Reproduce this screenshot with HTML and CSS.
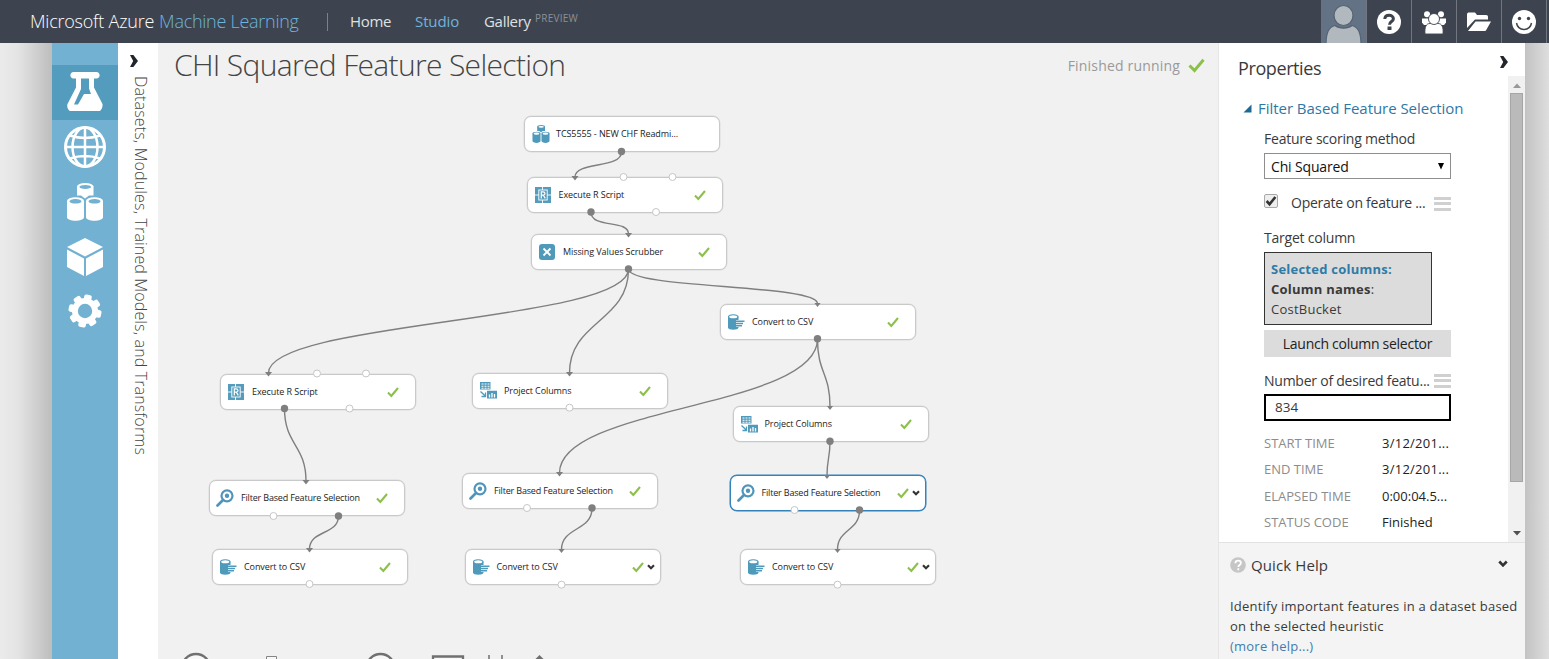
FILE: index.html
```html
<!DOCTYPE html>
<html lang="en">
<head>
<meta charset="utf-8">
<title>Microsoft Azure Machine Learning</title>
<link rel="stylesheet" href="styles.css">
</head>
<body>
<svg class="defs" aria-hidden="true">
  <symbol id="check" viewBox="0 0 12 12"><path d="M1 6.6 4.3 10 11 2" fill="none" stroke="#8cc04b" stroke-width="2.1"/></symbol>
  <symbol id="chev-r" viewBox="0 0 8 12"><path d="M0 0h3.4L8 6l-4.600 6H0l3.200-6z" fill="#22252b"/></symbol>
  <symbol id="chev-d" viewBox="0 0 8 6"><path d="M1 1.200 4 4.300 7 1.200" fill="none" stroke="#333" stroke-width="2.100"/></symbol>
  <symbol id="cylinders" viewBox="0 0 36 38">
    <path d="M10 3.500v9h4l4 3 4-3h4.500v-9z"/><ellipse cx="18.250" cy="3.500" rx="8.250" ry="3.500"/>
    <path d="M0 18v16c0 5 17 5 17 0V18zM19 18v16c0 5 17 5 17 0V18z"/>
    <ellipse cx="8.500" cy="18" rx="8.500" ry="3.800"/><ellipse cx="27.500" cy="18" rx="8.500" ry="3.800"/>
    <g class="hole"><ellipse cx="18.250" cy="3.900" rx="5.800" ry="2"/><ellipse cx="8.500" cy="18.300" rx="6" ry="2.300"/><ellipse cx="27.500" cy="18.300" rx="6" ry="2.300"/></g>
  </symbol>
  <symbol id="rscript" viewBox="0 0 16 16">
    <rect width="16" height="16" fill="#559cbc"/>
    <path d="M0 8h4M12 8h4M7.500 0v3M7.500 13v3" stroke="#fff" stroke-width=".9"/>
    <rect x="3.800" y="3" width="8.400" height="10" fill="#559cbc" stroke="#fff" stroke-width=".9"/>
    <path d="M6.300 11.400V4.900h1.700c2.600 0 2.600 3.300 0 3.300H6.300M8.300 8.200l2 3.200" fill="none" stroke="#fff" stroke-width="1.200"/>
  </symbol>
  <symbol id="scrub" viewBox="0 0 16 16"><rect width="16" height="16" rx="3" fill="#4f9abb"/><path d="M4.500 4.500l7 7M11.500 4.500l-7 7" stroke="#fff" stroke-width="1.800"/></symbol>
  <symbol id="csv" viewBox="0 0 17 16">
    <path d="M0 2.500v11c0 3 10.500 3 10.500 0v-11z" fill="#4f9abb"/><ellipse cx="5.250" cy="2.700" rx="5.250" ry="2.500" fill="#4f9abb"/><ellipse cx="5.250" cy="2.800" rx="4" ry="1.500" fill="#fff"/>
    <path d="M8 6H17v7H8z" fill="#fff"/><path d="M8 7.200H16.500M8 9.500h7M8 11.800H14" stroke="#4f9abb" stroke-width="1.400"/>
  </symbol>
  <symbol id="project" viewBox="0 0 17 17">
    <path d="M0 0h10.500v7.500H0zM7 8.800h10v7.700H7z" fill="#4f9abb"/>
    <path d="M1.500 2h8M1.500 4.200h8M1.500 6.300h8" stroke="#fff" stroke-width="1.100" stroke-dasharray="2 1"/>
    <path d="M9.500 15.500v-3M12 15.500v-4.500M14.500 15.500v-3.500" stroke="#fff" stroke-width="1.300"/>
    <path d="M.5 9.500 5 13.800M5.500 10.500v4H1.500" fill="none" stroke="#4f9abb" stroke-width="1.300"/>
  </symbol>
  <symbol id="filter" viewBox="0 0 18 18"><circle cx="11" cy="6.800" r="5.500" fill="none" stroke="#4f94bb" stroke-width="2.200"/><circle cx="11" cy="6.800" r="2.200" fill="#4f94bb"/><path d="M7 11 1.500 16.500" stroke="#4f94bb" stroke-width="2.700" stroke-linecap="round"/></symbol>
</svg>

<header class="topbar">
  <div class="brand"><span class="brand-ms">Microsoft Azure</span><span class="brand-ml">Machine Learning</span></div>
  <nav class="nav">
    <a class="nav-home">Home</a><a class="nav-studio">Studio</a><a class="nav-gallery">Gallery</a><span class="preview">PREVIEW</span>
  </nav>
  <div class="tools">
    <div class="tool avatar"><svg width="45" height="43" viewBox="0 0 45 43"><g fill="#b1b9bf" stroke="#566372" stroke-width="1.200"><path d="M5 44c0-10 2-17 9-18.500 4 3.500 13 3.500 17 0 7 1.500 9 8.500 9 18.500z"/><ellipse cx="22.500" cy="15.500" rx="9.500" ry="10"/></g></svg></div>
    <div class="tool"><svg width="24" height="24" viewBox="0 0 24 24"><circle cx="12" cy="12" r="12" fill="#fff"/><path d="M7.800 9c.2-5 8.600-4.700 8.600-.3 0 3-3.900 2.700-3.900 6" fill="none" stroke="#3e444f" stroke-width="3"/><path d="M10.500 16.500h4v3.500h-4z" fill="#3e444f"/></svg></div>
    <div class="tool"><svg width="24" height="24" viewBox="0 0 24 24" fill="#fff"><circle cx="5" cy="4.300" r="3"/><circle cx="19" cy="4.300" r="3"/><path d="M0 8.500h24v4L22 15H2l-2-2.500z"/><g stroke="#3e444f" stroke-width=".9"><path d="M3 24c-.5-7 1-10.500 5-10.500h8c4 0 5.500 3.500 5 10.500z"/><circle cx="12" cy="9" r="5.500"/></g></svg></div>
    <div class="tool"><svg width="24" height="20" viewBox="0 0 24 20" fill="#fff"><path d="M0 16V2.500C0 1 1 .5 2 .5h6l2 2.500h9c1.500 0 2 .7 2 2v2.500H8z"/><path d="M1 19 8.500 9.500H24l-4.500 8c-.5 1-1 1.500-2.500 1.500z"/></svg></div>
    <div class="tool tool-last"><svg width="24" height="24" viewBox="0 0 24 24"><circle cx="12" cy="12" r="12" fill="#fff"/><g fill="#3e444f"><circle cx="7.500" cy="8.500" r="1.700"/><circle cx="16.500" cy="8.500" r="1.700"/></g><path d="M4.500 13c1.500 8.500 13.500 8.500 15 0" fill="none" stroke="#3e444f" stroke-width="1.500"/></svg></div>
  </div>
</header>

<main class="stage">
  <div class="shade-left"></div>
  <aside class="rail">
    <div class="rail-item rail-active"><svg width="36" height="40" viewBox="0 0 36 40" fill="#fff"><path d="M6 0h24c3.500 1 3.500 5.500 0 6.500H27v9l8.500 16.500c.5 3-1.500 7-3 7h-29c-2 0-4-4-3-7L9 15.500v-9H6c-3.500-1-3.500-5.500 0-6.500z"/><path d="M14 6.500h8v10L24 22h-7l-6 10.500H7L14 17z" fill="#539cbd"/></svg></div>
    <div class="rail-item"><svg width="42" height="42" viewBox="0 0 42 42" fill="none" stroke="#fff" stroke-width="2.500"><circle cx="21" cy="21" r="19.500" stroke-width="3"/><ellipse cx="21" cy="21" rx="12.500" ry="19.500"/><path d="M21 1v40M1.500 21h39M6 9.500q15 5 30 0M6 32.500q15-5 30 0"/></svg></div>
    <div class="rail-item"><svg class="cyl-white" width="36" height="38"><use href="#cylinders"/></svg></div>
    <div class="rail-item"><svg width="36" height="38" viewBox="0 0 36 38" fill="#fff"><path d="M18 0 36 9 18 18.500 0 9zM0 11.500 17 20.500V38L0 29zM36 11.500 19 20.500V38l17-9z"/></svg></div>
    <div class="rail-item"><svg width="34" height="34" viewBox="-17 -17 34 34"><g fill="#fff" transform="rotate(12)"><g id="tooth"><rect x="-3.800" y="-16.500" width="7.600" height="33" rx="2"/><rect x="-16.500" y="-3.800" width="33" height="7.600" rx="2"/></g><use href="#tooth" transform="rotate(45)"/><circle r="13"/></g><circle r="7.200" fill="#72b1d1"/></svg></div>
  </aside>
  <aside class="palette">
    <svg class="palette-chev" width="8" height="12"><use href="#chev-r"/></svg>
    <div class="palette-label">Datasets, Modules, Trained Models, and Transforms</div>
  </aside>

  <section class="canvas">
    <div class="canvas-head">
      <h1>CHI Squared Feature Selection</h1>
      <div class="status"><span>Finished running</span><svg width="17" height="15" viewBox="0 0 17 15"><path d="M1.500 7.500 6.500 12.500 15.500 1.800" fill="none" stroke="#8cc04b" stroke-width="3"/></svg></div>
    </div>

    <div class="node n-data"><svg class="cyl-blue" width="18" height="18"><use href="#cylinders"/></svg><span>TCS5555 - NEW CHF Readmi...</span></div>
    <div class="node n-r1"><svg width="16" height="16"><use href="#rscript"/></svg><span>Execute R Script</span><svg class="ok"><use href="#check"/></svg></div>
    <div class="node n-scrub"><svg width="16" height="16"><use href="#scrub"/></svg><span>Missing Values Scrubber</span><svg class="ok"><use href="#check"/></svg></div>
    <div class="node n-csv0"><svg width="17" height="16"><use href="#csv"/></svg><span>Convert to CSV</span><svg class="ok"><use href="#check"/></svg></div>
    <div class="node n-r2"><svg width="16" height="16"><use href="#rscript"/></svg><span>Execute R Script</span><svg class="ok"><use href="#check"/></svg></div>
    <div class="node n-pc1"><svg width="17" height="17"><use href="#project"/></svg><span>Project Columns</span><svg class="ok"><use href="#check"/></svg></div>
    <div class="node n-pc2"><svg width="17" height="17"><use href="#project"/></svg><span>Project Columns</span><svg class="ok"><use href="#check"/></svg></div>
    <div class="node long n-f1"><svg width="18" height="18"><use href="#filter"/></svg><span>Filter Based Feature Selection</span><svg class="ok"><use href="#check"/></svg></div>
    <div class="node long n-f2"><svg width="18" height="18"><use href="#filter"/></svg><span>Filter Based Feature Selection</span><svg class="ok"><use href="#check"/></svg></div>
    <div class="node long n-f3 selected"><svg width="18" height="18"><use href="#filter"/></svg><span>Filter Based Feature Selection</span><svg class="ok"><use href="#check"/></svg><svg class="more"><use href="#chev-d"/></svg></div>
    <div class="node n-c1"><svg width="17" height="16"><use href="#csv"/></svg><span>Convert to CSV</span><svg class="ok"><use href="#check"/></svg></div>
    <div class="node n-c2"><svg width="17" height="16"><use href="#csv"/></svg><span>Convert to CSV</span><svg class="ok"><use href="#check"/></svg><svg class="more"><use href="#chev-d"/></svg></div>
    <div class="node n-c3"><svg width="17" height="16"><use href="#csv"/></svg><span>Convert to CSV</span><svg class="ok"><use href="#check"/></svg><svg class="more"><use href="#chev-d"/></svg></div>

    <svg class="edges" width="1060" height="616" viewBox="158 43 1060 616">
      <defs>
        <marker id="arrow" viewBox="0 0 8 5" refX="4" refY="1" markerWidth="8" markerHeight="5" markerUnits="userSpaceOnUse"><path d="M.5 0h7L4 4.500z" fill="#7f7f7f"/></marker>
      </defs>
      <g fill="none" stroke="#7f7f7f" stroke-width="1.400">
        <path marker-end="url(#arrow)" d="M621.500 152C621.500 169 575 161 575 177"/>
        <path marker-end="url(#arrow)" d="M591 212C591 229 628.500 219 628.500 234"/>
        <path marker-end="url(#arrow)" d="M628.500 269C628.500 322 268.500 321 268.500 373"/>
        <path marker-end="url(#arrow)" d="M628.500 269C628.500 322 569.500 321 569.500 373"/>
        <path marker-end="url(#arrow)" d="M628.500 269C628.500 289 817.500 284 817.500 303.500"/>
        <path marker-end="url(#arrow)" d="M817.500 339C817.500 408 559.500 406 559.500 473"/>
        <path marker-end="url(#arrow)" d="M817.500 339C817.500 373 830 373 830 406.500"/>
        <path marker-end="url(#arrow)" d="M284.500 408.500C284.500 445 306 445 306 481"/>
        <path marker-end="url(#arrow)" d="M830 441.500C830 458 827 459 827 475.500"/>
        <path marker-end="url(#arrow)" d="M338.500 516C338.500 535 309.500 530 309.500 549"/>
        <path marker-end="url(#arrow)" d="M592 508.500C592 531 561.500 527 561.500 549.500"/>
        <path marker-end="url(#arrow)" d="M859.500 510.500C859.500 531 837.500 529 837.500 549.500"/>
      </g>
      <g fill="#7f7f7f">
        <circle cx="621.500" cy="151.500" r="3.700"/><circle cx="591" cy="212" r="3.700"/><circle cx="628.500" cy="269" r="3.700"/><circle cx="817.500" cy="338.700" r="3.700"/><circle cx="284.500" cy="408.500" r="3.700"/><circle cx="830" cy="441.200" r="3.700"/><circle cx="338.500" cy="516" r="3.700"/><circle cx="592" cy="508" r="3.700"/><circle cx="859.500" cy="510" r="3.700"/>
      </g>
      <g fill="#fff" stroke="#c6c6c6">
        <circle cx="623.500" cy="177" r="3.500"/><circle cx="672.500" cy="177" r="3.500"/><circle cx="656" cy="212" r="3.500"/><circle cx="317" cy="373.500" r="3.500"/><circle cx="366" cy="373.500" r="3.500"/><circle cx="349.500" cy="408.500" r="3.500"/><circle cx="569.500" cy="407.700" r="3.500"/><circle cx="273.500" cy="516" r="3.500"/><circle cx="527" cy="508" r="3.500"/><circle cx="794.500" cy="510" r="3.500"/><circle cx="309.500" cy="584" r="3.500"/><circle cx="561.500" cy="584.700" r="3.500"/><circle cx="837.500" cy="584.700" r="3.500"/>
      </g>
      <g fill="#f7f7f7" stroke="#707070" stroke-width="2.300">
        <circle cx="196" cy="668" r="14"/><circle cx="380.500" cy="668" r="14"/><path d="M433 662v-5.500h30v5.500"/><path d="M489 655v5M502 655v5" stroke-width="1.500"/>
        <path d="M266.500 660v-3.500h10v3.500" stroke-width="1" stroke="#858585"/><path d="M534 660.500 539.500 655l5.500 5.500z" fill="#707070" stroke="none"/>
      </g>
    </svg>
  </section>

  <aside class="side">
    <div class="side-head"><h2>Properties</h2><svg width="8" height="12"><use href="#chev-r"/></svg></div>
    <div class="props-wrap">
      <div class="props">
        <h3><svg width="9" height="9" viewBox="0 0 9 9"><path d="M8.500 .5v8h-8z" fill="#1e6a94"/></svg><span>Filter Based Feature Selection</span></h3>
        <div class="fields">
          <label class="lb lb-method">Feature scoring method</label>
          <div class="select"><span>Chi Squared</span><svg width="6" height="7"><path d="M0 0h6L3 6.500z"/></svg></div>
          <div class="check-row"><div class="box"><svg width="12" height="12" viewBox="0 0 11 11"><path d="M1.500 5.500 4.200 8.500 9.500 1.800" fill="none" stroke="#333" stroke-width="2.400"/></svg></div><span>Operate on feature ...</span><i class="bars"></i></div>
          <label class="lb lb-target">Target column</label>
          <div class="selected-cols"><b class="blue">Selected columns:</b><span><b>Column names</b>:</span><span class="cost">CostBucket</span></div>
          <div class="launch">Launch column selector</div>
          <div class="num-label"><span>Number of desired featu...</span><i class="bars"></i></div>
          <div class="input">834</div>
          <dl class="meta">
            <dt>START TIME</dt><dd class="wide">3/12/201...</dd>
            <dt>END TIME</dt><dd class="wide">3/12/201...</dd>
            <dt>ELAPSED TIME</dt><dd>0:00:04.5...</dd>
            <dt>STATUS CODE</dt><dd>Finished</dd>
          </dl>
        </div>
      </div>
      <div class="scroll"><svg width="8" height="5"><path d="M0 5 4 .5 8 5z" fill="#999"/></svg><div class="thumb"></div><svg width="8" height="5"><path d="M0 0h8L4 4.500z" fill="#505050"/></svg></div>
    </div>
    <div class="help">
      <div class="help-head"><svg width="16" height="16" viewBox="0 0 16 16"><circle cx="8" cy="8" r="7.800" fill="#c6c6c6"/><path d="M5.300 6.200c.2-3.400 5.600-3.200 5.600-.2 0 2-2.600 1.900-2.600 4M8.300 11.300v1.900" fill="none" stroke="#fff" stroke-width="1.800"/></svg><h4>Quick Help</h4><svg class="help-chev" width="10" height="7.500"><use href="#chev-d"/></svg></div>
      <p><span>Identify important features in a dataset based</span><span>on the selected heuristic</span><a>(more help...)</a></p>
    </div>
  </aside>
  <div class="shade-right"></div>
</main>
</body>
</html>
```
FILE: styles.css
```css
* { box-sizing: border-box; }
body { margin: 0; width: 1549px; height: 659px; overflow: hidden; background: #ddd; font-family: "Open Sans", "Noto Sans", sans-serif; font-size: 14px; color: #3a3a3a; }
h1, h2, h3, h4, p, dl, dd { margin: 0; font-weight: 400; }
svg { display: block; flex: none; }
span, a, label, dt, dd, b { white-space: nowrap; }
.defs { position: absolute; width: 0; height: 0; }

.topbar { height: 43px; background: #3e444f; display: flex; align-items: center; padding-left: 30px; color: #fff; }
.brand { width: 298px; height: 18px; border-right: 1px solid #7d828a; display: flex; align-items: center; gap: 5px; font-size: 18px; font-weight: 300; line-height: 24px; }
.brand span { position: relative; top: -1px; }
.brand-ms { letter-spacing: -.22px; }
.brand-ml { color: #6fb4dc; letter-spacing: -.27px; }
.nav { display: flex; align-items: center; padding-left: 22px; font-size: 15px; color: #dfe1e3; line-height: 43px; }
.nav-home { width: 65px; letter-spacing: -.3px; }
.nav-studio { width: 69px; color: #6fb4dc; letter-spacing: -.1px; }
.nav-gallery { width: 51px; letter-spacing: -.3px; }
.preview { font-size: 10px; letter-spacing: .25px; color: #8b9097; line-height: 16px; margin-top: -7px; }
.tools { margin-left: auto; display: flex; }
.tool { width: 45px; height: 43px; border-right: 1px solid #70757e; display: flex; align-items: center; justify-content: center; }
.avatar { width: 46px; background: #637284; }
.tool-last { margin-right: 2px; }

.stage { display: flex; height: 616px; }
.shade-left { width: 52px; background: linear-gradient(90deg, #ebebeb, #e4e4e4 35%, #bdbdbd); }
.shade-right { width: 24px; background: linear-gradient(90deg, #c3c3c3, #dedede); }
.rail { width: 66px; background: #72b1d1; padding-top: 22px; }
.rail-item { height: 54.750px; display: flex; align-items: center; justify-content: center; }
.rail-active { background: #539cbd; }
.cyl-white { fill: #fff; color: #72b1d1; }
.cyl-blue { fill: #4f9abb; color: #fff; }
.hole { fill: currentColor; }
.palette { width: 40px; background: #fff; padding: 12px 0 0 12px; }
.palette-label { writing-mode: vertical-rl; margin-top: 9px; font-size: 16px; letter-spacing: .14px; font-weight: 300; line-height: 21px; color: #444; white-space: nowrap; }

.canvas { position: relative; width: 1060px; background: #f1f1f1; }
.canvas-head { display: flex; justify-content: space-between; padding: 0 13px 0 16px; height: 44px; align-items: center; }
h1 { font-size: 30px; font-weight: 300; line-height: 44px; letter-spacing: -.67px; color: #444; white-space: nowrap; }
.status { display: flex; align-items: center; gap: 8px; color: #9a9a9a; font-size: 14px; letter-spacing: .18px; }
.edges { position: absolute; left: 0; top: 0; }
.node { position: absolute; width: 196px; height: 36px; border: 1px solid #c9c9c9; box-shadow: 0 0 0 .5px #dcdcdc; border-radius: 7px; background: #fff; display: flex; align-items: center; padding-left: 7px; }
.node span { position: absolute; left: 31px; font-size: 9px; letter-spacing: -.08px; color: #1c1c1c; line-height: 14px; }
.node.long span { letter-spacing: -.17px; }
.node.long { padding-left: 6px; }
.node .ok { position: absolute; left: 166px; top: 11px; width: 12px; height: 12px; }
.node .more { position: absolute; left: 181px; top: 14px; width: 8px; height: 6px; }
.node.selected { border-color: #3482ba; box-shadow: 0 0 0 .5px #3482ba; }
.n-data { left: 366px; top: 73px; }
.n-r1 { left: 368.500px; top: 134px; }
.n-scrub { left: 373px; top: 191px; }
.n-csv0 { left: 562px; top: 260.500px; }
.n-r2 { left: 62px; top: 330.500px; }
.n-pc1 { left: 314px; top: 329.500px; }
.n-pc2 { left: 574.500px; top: 363px; }
.n-f1 { left: 51px; top: 437px; }
.n-f2 { left: 304px; top: 430px; }
.n-f3 { left: 571.500px; top: 432px; }
.n-c1 { left: 54px; top: 505.500px; }
.n-c2 { left: 306.500px; top: 506px; }
.n-c3 { left: 582px; top: 506px; }

.side { width: 307px; background: #fff; display: flex; flex-direction: column; border-left: 1px solid #e6e6e6; }
.side-head { height: 33px; display: flex; justify-content: space-between; padding: 13px 17px 0 19px; }
.side-head h2 { font-size: 18px; line-height: 25px; letter-spacing: -.4px; }
.props-wrap { height: 466px; display: flex; }
.props { width: 289px; padding: 22px 0 0 24px; }
h3 { display: flex; align-items: center; gap: 6px; font-size: 15px; line-height: 21px; color: #2f77a6; letter-spacing: -.04px; }
.fields { width: 187px; margin-left: 21px; display: flex; flex-direction: column; }
.lb { line-height: 20px; letter-spacing: -.22px; }
.lb-method { margin-top: 10px; height: 24px; }
.select { height: 26px; border: 1px solid #8e8e8e; display: flex; align-items: center; justify-content: space-between; padding: 0 6px; color: #111; letter-spacing: -.15px; }
.check-row { height: 49px; display: flex; align-items: center; letter-spacing: -.26px; }
.check-row span { margin-top: -2px; }
.box { width: 14px; height: 14px; border: 1px solid #a9a9a9; border-radius: 2px; background: #eee; margin: -6px 13px 0 0; }
.bars { width: 17px; height: 14px; margin-left: auto; border-top: 3px solid #d0d0d0; border-bottom: 3px solid #d0d0d0; background: linear-gradient(#fff 2.500px, #d0d0d0 2.500px 5.500px, #fff 5.500px); }
.lb-target { height: 24px; }
.selected-cols { width: 168px; height: 73px; border: 1px solid #333; background: #dcdcdc; padding: 6px; display: flex; flex-direction: column; font-size: 13px; line-height: 20px; letter-spacing: .24px; }
.blue { color: #2f7ba6; }
.launch { height: 27px; margin-top: 5px; background: #dcdcdc; line-height: 27px; text-align: center; letter-spacing: -.27px; color: #222; }
.num-label { height: 37px; padding-top: 10px; display: flex; align-items: center; line-height: 20px; letter-spacing: -.24px; }
.input { height: 27px; border: 2px solid #000; padding-left: 9px; line-height: 23px; font-size: 13.500px; }
.meta { display: grid; grid-template-columns: 118px 1fr; grid-auto-rows: 26.300px; margin-top: 9px; font-size: 13px; line-height: 27px; }
dt { color: #8c8c8c; }
dd { color: #222; }
.wide { letter-spacing: .25px; }
.scroll { width: 17px; background: #f1f1f1; display: flex; flex-direction: column; align-items: center; padding: 7px 0 6px; }
.thumb { width: 13px; height: 389px; margin: 5px 0 auto; background: #bababa; border: 1px solid #a6a6a6; }
.help { flex: 1; background: #f4f4f4; border-top: 1px solid #e2e2e2; padding: 11px 0 0 11px; }
.help-head { display: flex; align-items: center; height: 22px; padding-right: 17px; }
.help-head h4 { font-size: 15px; letter-spacing: .1px; margin: 0 auto 0 5px; }
.help-chev { margin-top: -3px; }
.help p { margin-top: 20px; display: flex; flex-direction: column; font-size: 13px; line-height: 20px; letter-spacing: .22px; }
.help a { color: #3f7db0; }
```
